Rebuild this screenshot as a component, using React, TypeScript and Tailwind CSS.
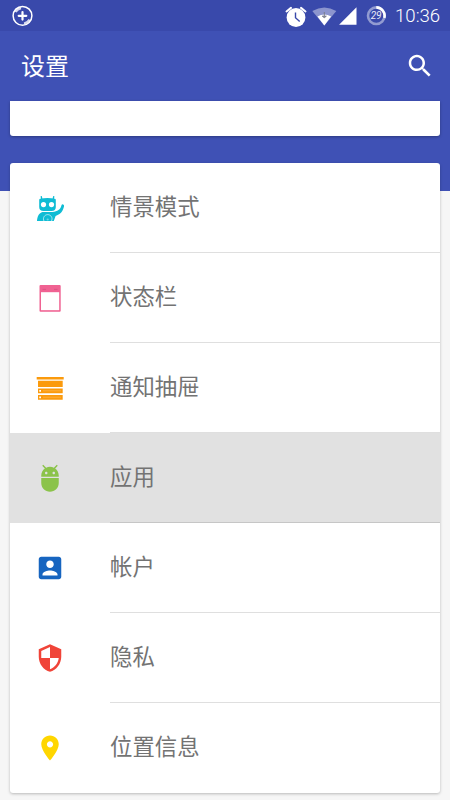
import React from 'react';

interface SettingsItem {
  label: string;
  icon: React.ReactNode;
  pressed?: boolean;
}

const ProfilesIcon = () => (
  <svg width="30" height="30" viewBox="0 0 30 30" fill="#0fbcd4">
    <path d="M6.300 3.600 6.800 6.500M18.700 3.600 18.200 6.500" stroke="#0fbcd4" strokeWidth="1.400" strokeLinecap="round" />
    <path d="M5 5.700Q12.500 4.500 20 5.700Q20.800 5.900 20.800 7V14Q20.800 18 16.500 18H8.500Q4.200 18 4.200 14V7Q4.200 5.900 5 5.700Z" />
    <circle cx="8.500" cy="11.600" r="2.600" fill="#fff" />
    <circle cx="16.500" cy="11.600" r="2.600" fill="#fff" />
    <path d="M2 28C2.400 23 4 20 7.500 18.900H17.500C22.500 18.600 25.400 16.500 26.400 12.500Q26.900 10.900 28.200 11.400Q29.400 12 29 13.500C27.800 18.800 25 21.500 20.600 22.900L18.800 28Z" />
    <path d="M9 28A4.300 4.300 0 1 1 16.500 28" fill="none" stroke="#b5ebf2" strokeWidth="0.900" />
    <circle cx="12.700" cy="26.500" r="1.100" fill="#6bd6e4" />
  </svg>
);

const StatusBarIcon = () => (
  <svg width="30" height="30" viewBox="0 0 30 30">
    <rect x="4.500" y="2" width="21.200" height="26.800" rx="1" fill="#f06292" />
    <rect x="6" y="9.200" width="18.200" height="18" fill="#fff" />
    <path d="M7.500 6.400h3.500M19 6.400h3.500" stroke="#d94f80" strokeWidth="0.800" />
  </svg>
);

const DrawerIcon = () => (
  <svg width="30" height="30" viewBox="0 0 30 30" fill="#fb9a0c">
    <path d="M1.700 4h27v2.600h-27zM3 7.700h24.700v6.200H3zM3 15.400h24.700v4.900H3zM3 21.900h24.700v4.900H3z" />
    <path d="M4.300 17h1.700v1.700H4.300zM4.300 23.500h1.700v1.700H4.300z" fill="#fff" />
    <path d="M8 17.800h18M8 24.200h18" stroke="#fdb750" strokeWidth="0.700" />
  </svg>
);

const AppsIcon = () => (
  <svg width="30" height="30" viewBox="0 0 24 24" fill="#8bc34a">
    <path d="M5 16c0 3.870 3.130 7 7 7s7-3.130 7-7v-4H5v4zM16.120 4.370l2.100-2.100-.820-.830-2.300 2.310C14.160 3.280 13.120 3 12 3s-2.160.280-3.090.750L6.600 1.440l-.820.830 2.100 2.100C6.140 5.640 5 7.680 5 10v1h14v-1c0-2.320-1.140-4.360-2.880-5.630zM9 9c-.550 0-1-.450-1-1s.450-1 1-1 1 .450 1 1-.450 1-1 1zm6 0c-.550 0-1-.450-1-1s.450-1 1-1 1 .450 1 1-.450 1-1 1z" />
  </svg>
);

const AccountIcon = () => (
  <svg width="30" height="30" viewBox="0 0 24 24" fill="#1765c0">
    <path d="M3 5v14c0 1.100.890 2 2 2h14c1.100 0 2-.900 2-2V5c0-1.100-.900-2-2-2H5c-1.110 0-2 .900-2 2zm12 4c0 1.660-1.340 3-3 3s-3-1.340-3-3 1.340-3 3-3 3 1.340 3 3zm-9 8c0-2 4-3.100 6-3.100s6 1.100 6 3.100v1H6v-1z" />
  </svg>
);

const PrivacyIcon = () => (
  <svg width="30" height="30" viewBox="0 0 24 24" fill="#f04438">
    <path d="M12 1 3 5v6c0 5.550 3.840 10.740 9 12 5.160-1.260 9-6.450 9-12V5l-9-4zm0 10.990h7c-.530 4.120-3.280 7.790-7 8.940V12H5V6.300l7-3.110v8.800z" />
  </svg>
);

const LocationIcon = () => (
  <svg width="30" height="30" viewBox="0 0 24 24" fill="#ffd600">
    <path d="M12 2C8.130 2 5 5.130 5 9c0 5.250 7 13 7 13s7-7.750 7-13c0-3.870-3.130-7-7-7zm0 9.500c-1.380 0-2.500-1.120-2.500-2.500s1.120-2.500 2.500-2.500 2.500 1.120 2.500 2.500-1.120 2.500-2.500 2.500z" />
  </svg>
);

const items: SettingsItem[] = [
  { label: '情景模式', icon: <ProfilesIcon /> },
  { label: '状态栏', icon: <StatusBarIcon /> },
  { label: '通知抽屉', icon: <DrawerIcon /> },
  { label: '应用', icon: <AppsIcon />, pressed: true },
  { label: '帐户', icon: <AccountIcon /> },
  { label: '隐私', icon: <PrivacyIcon /> },
  { label: '位置信息', icon: <LocationIcon /> },
];

const StatusBar = () => (
  <div className="flex h-[31px] shrink-0 items-center bg-[#3949ab] pl-3 pr-[9px] text-white">
    <svg width="22" height="22" viewBox="0 0 22 22" fill="none" stroke="#fff">
      <circle cx="10.500" cy="10.800" r="9.400" strokeWidth="1.500" />
      <path d="M3.600 7A7.900 7.900 0 0 1 9 3.100M12 18.500A7.900 7.900 0 0 0 17.500 14.500" strokeWidth="2.200" opacity="0.800" />
      <path d="M10.500 7v7.600M6.700 10.800h7.600" strokeWidth="2.200" strokeLinecap="round" />
    </svg>
    <div className="ml-auto flex items-center">
      <svg width="22" height="22" viewBox="0 0 22 22">
        <circle cx="11" cy="12.500" r="9.400" fill="#fff" />
        <path d="M1.500 6.500 6 2.900M20.500 6.500 16 2.900" stroke="#fff" strokeWidth="2" strokeLinecap="round" />
        <path d="M10.500 7.500v5.300l4.200 3.800" fill="none" stroke="#3949ab" strokeWidth="1.400" />
      </svg>
      <svg className="ml-[5px]" width="25" height="20" viewBox="0 0 25 20">
        <path d="M.300 5Q12.300-2 24.300 5L12.300 19.500Z" fill="#fff" fillOpacity="0.420" />
        <path d="M5.500 10.500Q12.300 6.500 19.100 10.500L12.300 19.500Z" fill="#fff" />
        <path d="M12.300 6v4M10.300 10.200h4l-2 1.500z" stroke="#7a7d8e" fill="#7a7d8e" strokeWidth="1" />
      </svg>
      <svg className="ml-[2px]" width="18" height="18" viewBox="0 0 18 18">
        <path d="M17.500.300v17.400H.100z" fill="#fff" />
      </svg>
      <svg className="ml-[9px] mr-px" width="20" height="20" viewBox="0 0 20 20">
        <circle cx="10.300" cy="9.700" r="8.300" fill="none" stroke="#fff" strokeOpacity="0.450" strokeWidth="2.600" />
        <path d="M10.300 1.400A8.300 8.300 0 0 1 18.300 11.900" fill="none" stroke="#fff" strokeWidth="2.600" />
        <text x="10.100" y="13.200" fill="#e8eaf6" fontSize="10" fontStyle="italic" textAnchor="middle" fontFamily="Roboto, sans-serif">29</text>
      </svg>
      <span className="ml-2 w-[46px] whitespace-nowrap pt-0.5 font-['Roboto',sans-serif] text-[18.600px] font-light leading-none">10:36</span>
    </div>
  </div>
);

const Toolbar = () => (
  <header className="flex h-[70px] shrink-0 items-center justify-between pl-[21px] pr-[15px] text-white">
    <h1 className="pb-[3px] text-2xl leading-none">设置</h1>
    <svg width="30" height="30" viewBox="0 0 24 24" fill="currentColor">
      <path d="M15.500 14h-.790l-.280-.270C15.410 12.590 16 11.110 16 9.500 16 5.910 13.090 3 9.500 3S3 5.910 3 9.500 5.910 16 9.500 16c1.610 0 3.090-.590 4.230-1.570l.270.280v.790l5 4.990L20.490 19l-4.990-5zm-6 0C7.010 14 5 11.990 5 9.500S7.010 5 9.500 5 14 7.010 14 9.500 11.990 14 9.500 14z" />
    </svg>
  </header>
);

const SettingsRow: React.FC<{ item: SettingsItem; last: boolean }> = ({ item, last }) => (
  <li className={`flex h-[90px] ${item.pressed ? 'bg-[#e1e1e1]' : ''}`}>
    <div className="flex w-[100px] items-center pl-[25px]">{item.icon}</div>
    <div
      className={`flex flex-1 items-center border-b pb-1 text-[22.400px] leading-none text-[#737373] ${
        last ? 'border-transparent' : item.pressed ? 'border-[#c6c6c6]' : 'border-[#dfdfdf]'
      }`}
    >
      {item.label}
    </div>
  </li>
);

export default function App() {
  return (
    <div className="flex h-[800px] w-[450px] flex-col overflow-hidden bg-[linear-gradient(#3f51b5_191px,#f6f6f6_191px)] font-['Noto_Sans_CJK_SC',sans-serif]">
      <StatusBar />
      <Toolbar />
      <main className="flex flex-col gap-[27px] px-[10px]">
        <div className="h-[35px] rounded-b-[3px] bg-white shadow-[0_1px_3px_rgba(0,0,0,0.300)]" />
        <ul className="overflow-hidden rounded-[3px] bg-white shadow-[0_1px_3px_rgba(0,0,0,0.250)]">
          {items.map((item, idx) => (
            <SettingsRow key={item.label} item={item} last={idx === items.length - 1} />
          ))}
        </ul>
      </main>
    </div>
  );
}
